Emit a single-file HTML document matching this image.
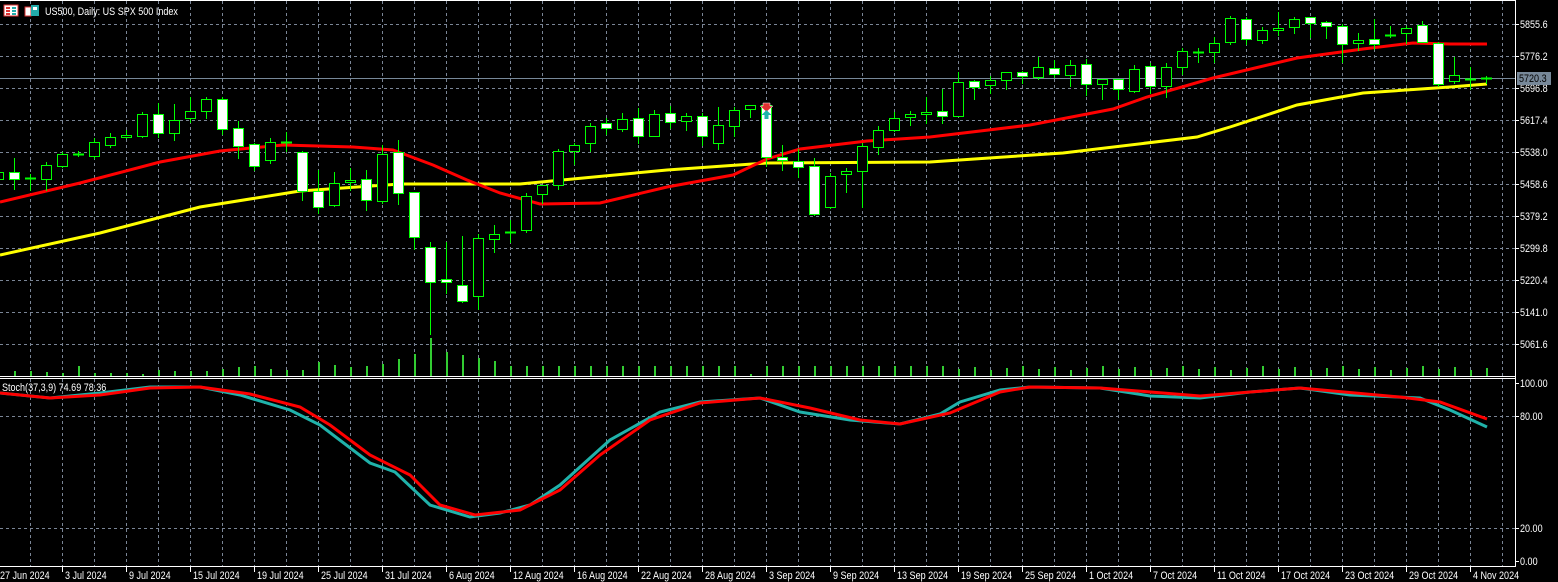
<!DOCTYPE html>
<html><head><meta charset="utf-8"><style>
html,body{margin:0;padding:0;background:#000;width:1558px;height:582px;overflow:hidden}
svg{display:block}
text{font-family:"Liberation Sans","DejaVu Sans",sans-serif;font-size:11px;fill:#fff}
</style></head><body>
<svg id="s" width="1558" height="582" xmlns="http://www.w3.org/2000/svg">
<rect width="1558" height="582" fill="#000"/>
<g id="grid" stroke="#7a8596" stroke-width="1" stroke-dasharray="3,3"></g>
<g id="vol" fill="#32cd32"></g>
<line x1="0" y1="78.5" x2="1515" y2="78.5" stroke="#778899"/>
<polyline id="ma2" fill="none" stroke="#ffff00" stroke-width="3"/>
<polyline id="ma1" fill="none" stroke="#ff0000" stroke-width="3"/>
<g id="c"></g>
<polyline id="st2" fill="none" stroke="#20b2aa" stroke-width="3"/>
<polyline id="st1" fill="none" stroke="#ff0000" stroke-width="3"/>
<g stroke="#fff" stroke-width="1">
<line x1="0" y1="0.5" x2="1515" y2="0.5"/>
<line x1="1515.5" y1="0" x2="1515.5" y2="567"/>
<line x1="0" y1="376.5" x2="1515" y2="376.5"/>
<line x1="0" y1="378.5" x2="1515" y2="378.5"/>
<line x1="0" y1="566.5" x2="1515" y2="566.5"/>
</g>
<g id="ax"></g>
<rect x="1517" y="72" width="34" height="13" fill="#778899"/>
<text x="1519" y="82" style="fill:#000">5720.3</text>
<g>
<rect x="4" y="5" width="14" height="11" fill="#fff" stroke="#d33" stroke-width="1"/>
<rect x="6" y="7" width="4" height="2" fill="#d33"/><rect x="12" y="7" width="4" height="2" fill="#2aa"/>
<rect x="6" y="10" width="4" height="2" fill="#d33"/><rect x="12" y="10" width="4" height="2" fill="#2aa"/>
<rect x="6" y="13" width="4" height="2" fill="#d33"/><rect x="12" y="13" width="4" height="2" fill="#2aa"/>
<rect x="25" y="7" width="6" height="9" fill="#fff" stroke="#d33"/>
<rect x="31" y="5" width="8" height="11" fill="#2aa"/><rect x="33" y="7" width="4" height="3" fill="#fff"/>
</g>
<text x="45" y="15">US500, Daily:  US SPX 500 Index</text>
<text x="2" y="391">Stoch(37,3,9) 74.69 78.36</text>
</svg>
<script>
var NS="http://www.w3.org/2000/svg";
function el(p,t,a,txt){var e=document.createElementNS(NS,t);for(var k in a)e.setAttribute(k,a[k]);if(txt)e.textContent=txt;document.getElementById(p).appendChild(e);return e;}
for(var x=30;x<=1502;x+=32){el('grid','line',{x1:x+.5,y1:1,x2:x+.5,y2:376});el('grid','line',{x1:x+.5,y1:379,x2:x+.5,y2:566});}
for(var y=24;y<=344;y+=32){el('grid','line',{x1:0,y1:y+.5,x2:1515,y2:y+.5});}
[416,528].forEach(function(y){el('grid','line',{x1:0,y1:y+.5,x2:1515,y2:y+.5});});
var pl=["5855.6","5776.2","5696.8","5617.4","5538.0","5458.6","5379.2","5299.8","5220.4","5141.0","5061.6"];
pl.forEach(function(t,i){var y=24+32*i;el('ax','line',{x1:1515,y1:y+.5,x2:1519,y2:y+.5,stroke:'#fff'});el('ax','text',{x:1520,y:y+4},t);});
[["100.00",383],["80.00",416],["20.00",528],["0.00",561]].forEach(function(a){el('ax','line',{x1:1515,y1:a[1]+.5,x2:1519,y2:a[1]+.5,stroke:'#fff'});el('ax','text',{x:1520,y:a[1]+4},a[0]);});
var dl=["27 Jun 2024","3 Jul 2024","9 Jul 2024","15 Jul 2024","19 Jul 2024","25 Jul 2024","31 Jul 2024","6 Aug 2024","12 Aug 2024","16 Aug 2024","22 Aug 2024","28 Aug 2024","3 Sep 2024","9 Sep 2024","13 Sep 2024","19 Sep 2024","25 Sep 2024","1 Oct 2024","7 Oct 2024","11 Oct 2024","17 Oct 2024","23 Oct 2024","29 Oct 2024","4 Nov 2024"];
dl.forEach(function(t,i){var x=-2+64*i;if(i>0)el('ax','line',{x1:x+.5,y1:566,x2:x+.5,y2:572,stroke:'#fff'});el('ax','text',{x:i==0?0:x+3,y:579},t);});
var C=[[-2,168,172,179,186,0],[14,158,172,179,189,1],[30,174,178,178,190,0],[46,162,165,179,190,0],[62,152,154,166,167,0],[78,151,154,154,156,0],[94,138,142,156,158,0],[110,133,137,145,147,0],[126,130,135,137,138,0],[142,112,114,136,137,0],[158,103,114,133,137,1],[174,104,120,133,140,0],[190,97,111,118,122,0],[206,97,99,111,118,0],[222,97,99,129,134,1],[238,121,128,146,158,1],[254,143,144,166,170,1],[270,138,142,160,163,0],[286,132,142,142,151,0],[302,151,152,191,200,1],[318,170,191,207,213,1],[334,172,183,205,206,0],[350,168,180,182,190,0],[366,170,179,200,210,1],[382,145,154,201,203,0],[398,140,152,193,204,1],[414,192,192,237,249,1],[430,242,247,282,334,1],[446,242,279,282,293,1],[462,236,285,301,302,1],[478,234,238,296,309,0],[494,225,234,239,252,0],[510,220,232,232,242,0],[526,193,196,230,232,0],[542,185,185,194,203,0],[558,149,151,185,189,0],[574,143,145,151,164,0],[590,123,126,143,151,0],[606,118,123,128,134,1],[622,113,119,129,131,0],[638,108,118,136,143,1],[654,110,114,136,136,0],[670,106,113,122,128,1],[686,113,116,121,130,0],[702,113,116,136,145,1],[718,107,125,143,149,0],[734,107,110,126,136,0],[750,105,105,109,117,0],[766,103,105,157,166,1],[782,145,157,160,170,1],[798,149,161,167,177,1],[814,158,166,214,215,1],[830,173,176,207,208,0],[846,168,171,174,192,0],[862,143,146,171,207,0],[878,126,130,147,154,0],[894,112,118,130,131,0],[910,111,114,117,125,0],[926,97,112,114,123,0],[942,89,111,116,123,1],[958,72,82,116,116,0],[974,80,81,87,99,1],[990,76,80,85,93,0],[1006,72,72,80,89,0],[1022,71,72,76,83,1],[1038,57,67,77,79,0],[1054,60,68,74,77,1],[1070,60,65,75,86,0],[1086,59,64,84,95,1],[1102,79,79,84,99,0],[1118,79,79,89,99,1],[1134,65,69,91,92,0],[1150,63,66,86,93,1],[1166,63,67,86,97,0],[1182,48,51,67,74,0],[1198,48,52,52,62,0],[1214,37,43,52,62,0],[1230,16,18,42,44,0],[1246,17,19,39,44,1],[1262,27,30,40,43,0],[1278,12,28,30,35,0],[1294,17,19,27,33,0],[1310,17,17,23,37,1],[1326,21,22,26,38,1],[1342,24,26,44,62,1],[1358,33,40,43,50,0],[1374,19,39,44,49,1],[1390,26,35,35,37,0],[1406,26,28,33,43,0],[1422,21,25,42,42,1],[1438,42,43,84,86,1],[1454,57,75,81,83,0],[1470,67,79,79,89,0],[1486,76,78,78,83,0]];
var VH={14:5,30:5,46:4,62:3,94:3,110:3,126:3,142:2,158:6,174:5,190:5,206:5,222:7,238:9,254:10,270:7,286:6,302:6,318:14,334:11,350:9,366:10,382:12,398:17,414:22,430:38,446:24,462:21,478:18,494:15,510:10,750:2};
C.forEach(function(c){
 var x=c[0];
 el('c','line',{x1:x+.5,y1:c[1],x2:x+.5,y2:c[4]+1,stroke:'#00ff00'});
 var h=c[3]-c[2];
 if(h<1){el('c','line',{x1:x-5,y1:c[2]+.5,x2:x+6,y2:c[2]+.5,stroke:'#00ff00',"stroke-width":2});}
 else el('c','rect',{x:x-4.5,y:c[2]+.5,width:10,height:h,fill:c[5]?'#fff':'#000',stroke:'#00ff00'});
 var v=VH[x]!==undefined?VH[x]:(x<940?10:6+((x*7)%5));
 if(x>=0)el('vol','rect',{x:x,y:376-v,width:2,height:v});
});
el('c','path',{d:"M763 103h7v3h3l-6.5 6-6.5-6h3z",fill:'#e03030',stroke:'#fff','stroke-width':.5});
el('c','path',{d:"M766.5 110l5 5h-3v4h-4v-4h-3z",fill:'#20b2aa'});
function pts(id,a){document.getElementById(id).setAttribute('points',a.map(function(p){return p.join(',')}).join(' '));}
pts('ma1',[[0,202],[80,183],[160,162],[220,151],[283,145],[353,147],[393,150],[433,165],[467,180],[500,193],[540,204],[600,203],[667,187],[733,175],[767,159],[800,149],[867,141],[930,137],[1030,125],[1113,109],[1147,97],[1213,78],[1297,58],[1363,49],[1413,43],[1450,44],[1487,44]]);
pts('ma2',[[0,255],[100,233],[200,207],[300,191],[400,184],[520,184],[667,170],[767,163],[930,162],[1063,153],[1197,137],[1230,127],[1297,105],[1363,93],[1450,87],[1487,84]]);
pts('st2',[[0,393],[50,398],[100,393],[150,387],[200,387],[240,395],[290,410],[320,425],[370,463],[395,472],[430,505],[470,517],[500,513],[530,505],[560,485],[610,440],[660,412],[700,402],[760,398],[800,412],[850,420],[900,424],[940,414],[960,402],[1000,390],[1030,387],[1100,388],[1150,396],[1200,398],[1250,392],[1300,388],[1350,395],[1420,398],[1450,410],[1487,427]]);
pts('st1',[[0,393],[50,398],[100,395],[150,388],[200,387],[250,394],[300,407],[330,425],[370,455],[410,475],[440,505],[475,515],[520,510],[560,490],[600,455],[650,420],[700,403],[760,398],[810,408],[860,420],[900,424],[950,413],[1000,392],[1030,387],[1100,388],[1200,396],[1300,388],[1400,397],[1440,402],[1487,419]]);
var ts=document.querySelectorAll('text');
for(var i=0;i<ts.length;i++){var w=ts[i].getComputedTextLength();ts[i].setAttribute('textLength',(w*0.82).toFixed(1));ts[i].setAttribute('lengthAdjust','spacingAndGlyphs');}
</script>
</body></html>
